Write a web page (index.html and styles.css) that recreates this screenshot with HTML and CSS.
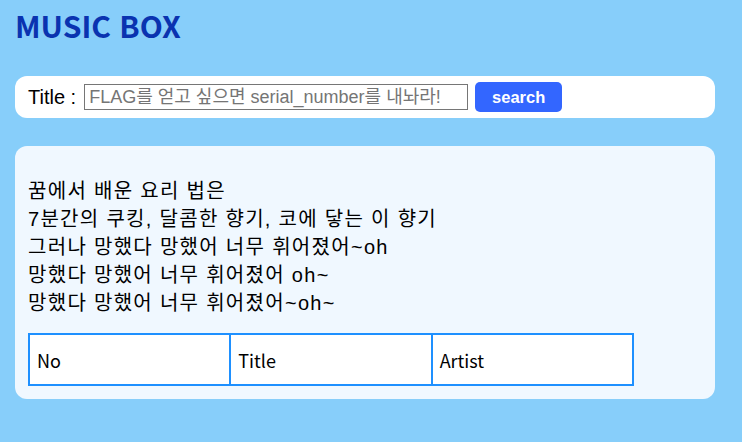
FILE: index.html
```html
<!DOCTYPE html>
<html lang="ko">
<head>
    <meta charset="UTF-8">
    <title>MUSIC BOX</title>
    <link rel="stylesheet" href="styles.css">
</head>
<body>
    <h1 class="logo">MUSIC BOX</h1>
    <form class="search-box" onsubmit="return false;">
        <label for="title">Title :</label>
        <input type="text" id="title" placeholder="FLAG를 얻고 싶으면 serial_number를 내놔라!">
        <button type="submit" class="search-button">search</button>
    </form>
    <div class="result-box">
        <p class="lyrics">
            꿈에서 배운 요리 법은<br>
            7분간의 쿠킹, 달콤한 향기, 코에 닿는 이 향기<br>
            그러나 망했다 망했어 너무 휘어졌어~oh<br>
            망했다 망했어 너무 휘어졌어 oh~<br>
            망했다 망했어 너무 휘어졌어~oh~
        </p>
        <table class="music-table">
            <tr>
                <td>No</td>
                <td>Title</td>
                <td>Artist</td>
            </tr>
        </table>
    </div>
</body>
</html>
```

FILE: styles.css
```css
body {
    margin: 0;
    padding: 0 15px;
    background-color: #87cefa;
    font-family: "Noto Sans CJK KR", "Noto Sans", sans-serif;
    color: #000;
}

.logo {
    margin: 0;
    padding-top: 5px;
    height: 76px;
    box-sizing: border-box;
    font-size: 30px;
    line-height: 40px;
    font-weight: bold;
    color: #0a33b0;
}

.search-box {
    width: 700px;
    height: 42px;
    box-sizing: border-box;
    padding: 0 13px;
    background-color: #fff;
    border-radius: 12px;
    display: flex;
    align-items: center;
    margin-bottom: 28px;
}

.search-box label {
    font-family: "Liberation Sans", Arial, sans-serif;
    font-size: 20px;
    margin-right: 8px;
}

.search-box input {
    width: 384px;
    height: 26px;
    box-sizing: border-box;
    border: 1px solid #767676;
    padding: 0 4px;
    font-family: "Liberation Sans", "Noto Sans CJK KR", sans-serif;
    font-size: 18px;
}

.search-box input::placeholder {
    color: #757575;
}

.search-button {
    margin-left: 7px;
    width: 87px;
    height: 30px;
    border: none;
    border-radius: 5px;
    background-color: #3366ff;
    color: #fff;
    font-family: "Liberation Sans", Arial, sans-serif;
    font-weight: bold;
    font-size: 16.5px;
}

.result-box {
    width: 700px;
    box-sizing: border-box;
    padding: 13px;
    background-color: #f0f8ff;
    border-radius: 12px;
}

.lyrics {
    margin: 18px 0 16px;
    font-family: "Liberation Sans", "Noto Sans CJK KR", sans-serif;
    font-size: 20px;
    line-height: 28px;
    letter-spacing: 1.3px;
}

.music-table {
    border-collapse: collapse;
    table-layout: fixed;
    width: 606px;
    background-color: #fff;
    font-size: 18px;
}

.music-table td {
    border: 2px solid #1e90ff;
    height: 49px;
    padding: 0 7px;
}
```
